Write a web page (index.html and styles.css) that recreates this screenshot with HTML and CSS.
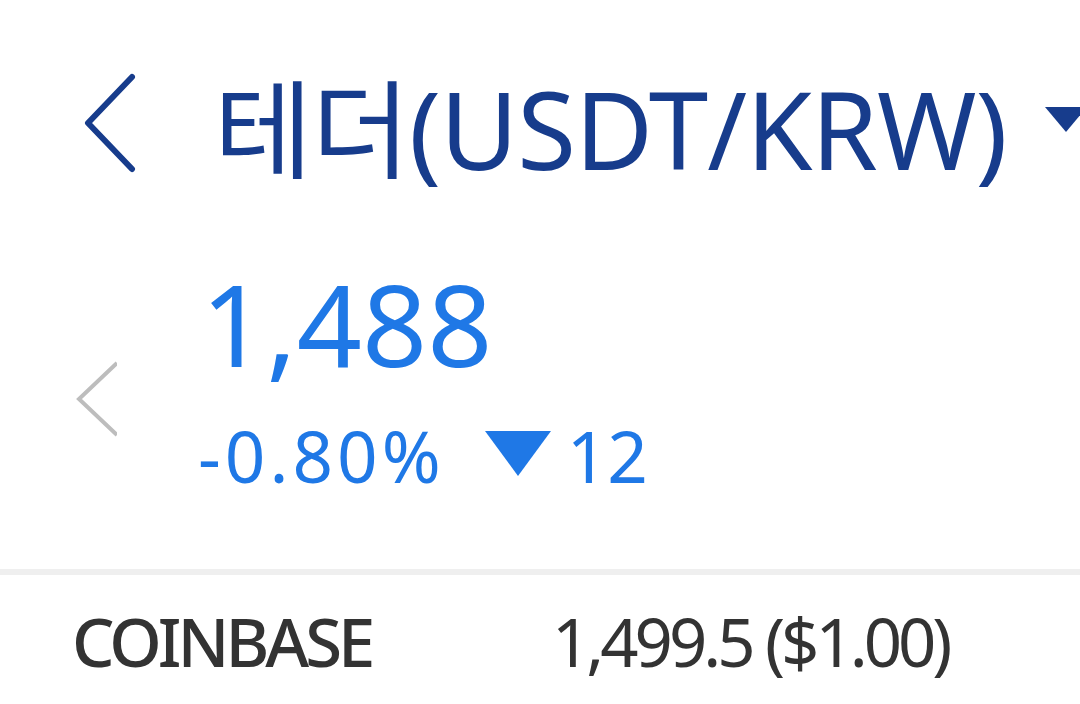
FILE: index.html
```html
<!DOCTYPE html>
<html lang="ko">
<head>
    <meta charset="UTF-8">
    <meta name="viewport" content="width=device-width, initial-scale=1.0">
    <title>테더(USDT/KRW)</title>
    <link rel="stylesheet" href="styles.css">
</head>
<body>
  <div class="screen">
    <header class="top-bar">
        <svg class="back-icon" viewBox="0 0 60 100" width="60" height="100">
            <polyline points="52,4 8,50 52,96" fill="none" stroke="#173c8c" stroke-width="6" stroke-linecap="round" stroke-linejoin="round"/>
        </svg>
        <h1 class="coin-title">테더(USDT/KRW)</h1>
        <span class="title-caret"></span>
    </header>

    <section class="price-box">
        <div class="prev-col">
            <svg class="prev-icon" viewBox="0 0 44 76" width="44" height="76">
                <polyline points="42,2 4,38 42,74" fill="none" stroke="#bdbdbd" stroke-width="4"/>
            </svg>
        </div>
        <div class="price-info">
            <div class="price-now">1,488</div>
            <div class="price-change">
                <span class="change-rate">-0.80%</span>
                <span class="down-mark"></span>
                <span>12</span>
            </div>
        </div>
    </section>

    <div class="exchange-list">
        <div class="exchange-row">
            <span class="exchange-name">COINBASE</span>
            <span class="exchange-price">1,499.5 ($1.00)</span>
        </div>
    </div>
  </div>
</body>
</html>
```

FILE: styles.css
```css
* {
    margin: 0;
    padding: 0;
    box-sizing: border-box;
}

body {
    font-family: "Noto Sans", "Noto Sans CJK KR", sans-serif;
    background-color: #fff;
    overflow: hidden;
}

.screen {
    width: 1080px;
    height: 704px;
    overflow: hidden;
}

/* Top bar */
.top-bar {
    display: flex;
    align-items: center;
    height: 246px;
    padding-left: 80px;
    white-space: nowrap;
}

.back-icon {
    flex: none;
    margin-bottom: 1px;
}

.coin-title {
    margin-left: 74px;
    font-size: 107px;
    font-weight: 400;
    color: #173c8c;
    letter-spacing: -1px;
}

.title-caret {
    flex: none;
    margin-left: 38px;
    margin-bottom: 8px;
    width: 0;
    height: 0;
    border-left: 21px solid transparent;
    border-right: 21px solid transparent;
    border-top: 25px solid #173c8c;
}

/* Current price */
.price-box {
    display: flex;
    height: 329px;
    border-bottom: 6px solid #efefef;
}

.prev-col {
    width: 117px;
    flex: none;
    overflow: hidden;
    padding-left: 75px;
    padding-top: 115px;
}

.price-info {
    padding-left: 84px;
    color: #1f78e6;
}

.price-now {
    font-size: 114px;
    line-height: 1;
    margin-top: 20px;
}

.price-change {
    display: flex;
    align-items: center;
    font-size: 71px;
    line-height: 1;
    margin-top: 40px;
    margin-left: -3px;
}

.change-rate {
    letter-spacing: 4px;
}

.down-mark {
    width: 0;
    height: 0;
    margin-left: 40px;
    margin-right: 16px;
    margin-bottom: 4px;
    border-left: 33px solid transparent;
    border-right: 33px solid transparent;
    border-top: 45px solid #1f78e6;
}

/* Exchange prices */
.exchange-row {
    display: flex;
    align-items: center;
    height: 132px;
    padding-left: 72px;
    color: #333;
    font-size: 67px;
}

.exchange-name {
    width: 480px;
    font-weight: 500;
    letter-spacing: -4px;
}

.exchange-price {
    letter-spacing: -4px;
}
```
